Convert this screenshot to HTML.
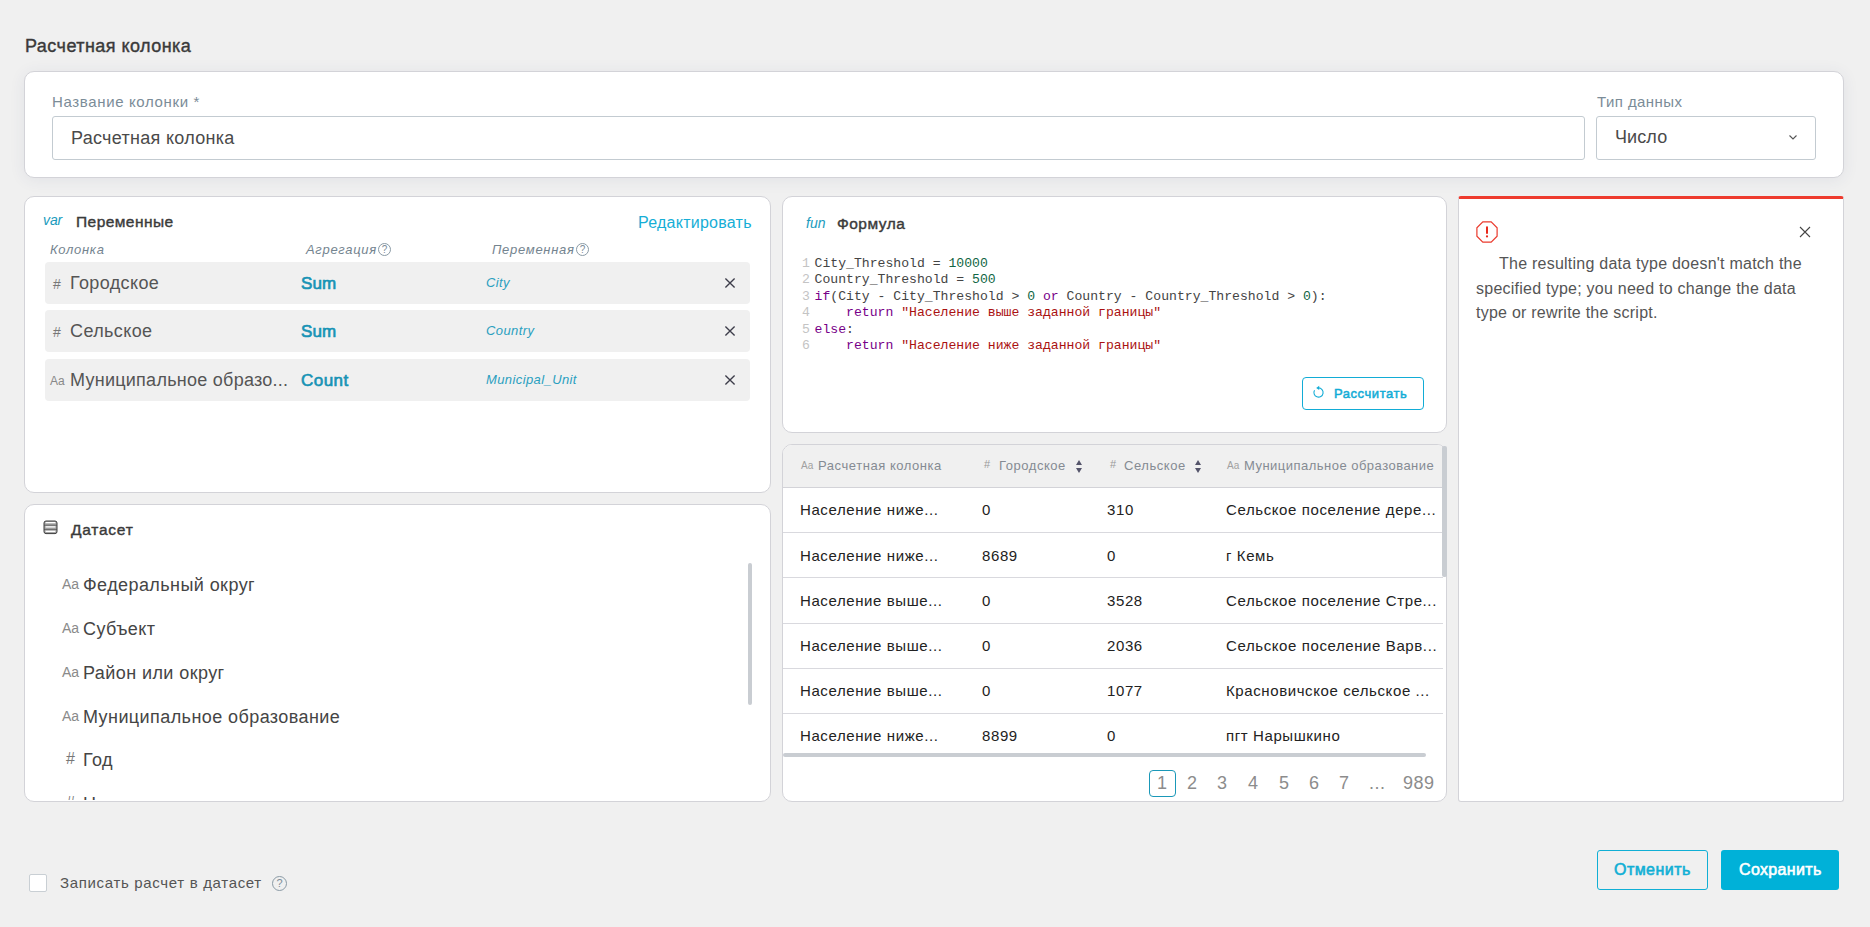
<!DOCTYPE html>
<html><head><meta charset="utf-8">
<style>
*{box-sizing:border-box;margin:0;padding:0}
html,body{width:1870px;height:927px;overflow:hidden;background:#f0f0f0;font-family:"Liberation Sans",sans-serif;color:#333}
.a{position:absolute}
.card{position:absolute;background:#fff;border:1px solid #d3d3d8;border-radius:10px}
.t{position:absolute;white-space:nowrap;line-height:1}
.sb{-webkit-text-stroke:.4px currentColor}
.row{position:absolute;left:45px;width:705px;height:42px;background:#f0f0f0;border-radius:4px}
.hdr{font-size:13px;font-style:italic;color:#74848f;letter-spacing:.7px}
.q{position:absolute;width:13px;height:13px;border:1px solid #8a9aa5;border-radius:50%;font-size:10px;line-height:11px;text-align:center;color:#7d8d99;font-style:normal;letter-spacing:0}
.code{position:absolute;left:802px;font-family:"Liberation Mono",monospace;font-size:13.13px;line-height:16.4px;white-space:pre;color:#444}
.ln{color:#c4c4c4;display:inline-block;width:12.5px}
.kw{color:#770088}.nu{color:#116644}.st{color:#aa1111}
.dl{position:absolute;left:62px;font-size:18px;color:#454545;letter-spacing:.42px;white-space:nowrap;line-height:1}
.aa{position:absolute;left:37px;font-size:14px;color:#8a8a8a;line-height:1;white-space:nowrap}
.hs{position:absolute;left:41px;margin-top:1px;font-size:16px;color:#777;line-height:1;white-space:nowrap}
.td{position:absolute;font-size:15px;color:#222;letter-spacing:.6px;white-space:nowrap;line-height:1}
.sep{position:absolute;left:783px;width:660px;height:1px;background:#d9d9de}
.pg{position:absolute;top:774px;font-size:18px;color:#8c8c8c;letter-spacing:.5px;line-height:1;white-space:nowrap}
</style></head><body>

<div class="t sb" style="left:25px;top:37px;font-size:18px;color:#3a3a3a;letter-spacing:.45px">Расчетная колонка</div>

<!-- top card -->
<div class="card" style="left:24px;top:71px;width:1820px;height:107px;box-shadow:0 2px 16px rgba(50,60,110,0.08)"></div>
<div class="t" style="left:52px;top:94px;font-size:15px;color:#7b8c98;letter-spacing:.64px">Название колонки *</div>
<div class="a" style="left:52px;top:116px;width:1533px;height:44px;border:1px solid #c3cbd1;border-radius:3px;background:#fff"></div>
<div class="t" style="left:71px;top:129px;font-size:18px;color:#4a4a4a;letter-spacing:.3px">Расчетная колонка</div>
<div class="t" style="left:1597px;top:94px;font-size:15px;color:#7b8c98;letter-spacing:.43px">Тип данных</div>
<div class="a" style="left:1596px;top:116px;width:220px;height:44px;border:1px solid #c3cbd1;border-radius:3px;background:#fff"></div>
<div class="t" style="left:1615px;top:128px;font-size:18px;color:#4a4a4a;letter-spacing:.1px">Число</div>
<svg class="a" style="left:1787px;top:133px" width="12" height="9" viewBox="0 0 12 9"><path d="M2.5 2.5 L6 6 L9.5 2.5" fill="none" stroke="#555" stroke-width="1.1"/></svg>

<!-- var card -->
<div class="card" style="left:24px;top:196px;width:747px;height:297px"></div>
<div class="t" style="left:43px;top:213px;font-size:14px;font-style:italic;color:#1a9bbd;letter-spacing:-.1px">var</div>
<div class="t sb" style="left:76px;top:214px;font-size:15.5px;color:#3a3a3a;letter-spacing:.44px">Переменные</div>
<div class="t" style="left:638px;top:215px;font-size:16px;color:#16aed6;letter-spacing:.25px">Редактировать</div>
<div class="t hdr" style="left:50px;top:243px">Колонка</div>
<div class="t hdr" style="left:306px;top:243px">Агрегация</div>
<div class="q" style="left:378px;top:243px">?</div>
<div class="t hdr" style="left:492px;top:243px">Переменная</div>
<div class="q" style="left:576px;top:243px">?</div>

<div class="row" style="top:262px"></div>
<div class="row" style="top:310px"></div>
<div class="row" style="top:359px"></div>
<div class="t" style="left:53px;top:277px;font-size:14px;color:#777">#</div>
<div class="t" style="left:70px;top:274px;font-size:18px;color:#555;letter-spacing:.38px">Городское</div>
<div class="t" style="left:301px;top:275px;font-size:17px;color:#1793b5;-webkit-text-stroke:.65px #1793b5;letter-spacing:.1px">Sum</div>
<div class="t" style="left:486px;top:276px;font-size:13px;font-style:italic;color:#2a9fbf;letter-spacing:.4px">City</div>
<div class="t" style="left:53px;top:325px;font-size:14px;color:#777">#</div>
<div class="t" style="left:70px;top:322px;font-size:18px;color:#555;letter-spacing:.38px">Сельское</div>
<div class="t" style="left:301px;top:323px;font-size:17px;color:#1793b5;-webkit-text-stroke:.65px #1793b5;letter-spacing:.1px">Sum</div>
<div class="t" style="left:486px;top:324px;font-size:13px;font-style:italic;color:#2a9fbf;letter-spacing:.4px">Country</div>
<div class="t" style="left:50px;top:375px;font-size:12px;color:#888">Aa</div>
<div class="t" style="left:70px;top:371px;font-size:18px;color:#555;letter-spacing:.26px">Муниципальное образо...</div>
<div class="t" style="left:301px;top:372px;font-size:17px;color:#1793b5;-webkit-text-stroke:.65px #1793b5;letter-spacing:.45px">Count</div>
<div class="t" style="left:486px;top:373px;font-size:13px;font-style:italic;color:#2a9fbf;letter-spacing:.4px">Municipal_Unit</div>
<svg class="a" style="left:724px;top:277px" width="12" height="12" viewBox="0 0 12 12"><path d="M1.4 1.4L10.6 10.6M10.6 1.4L1.4 10.6" stroke="#3d3d4a" stroke-width="1.35"/></svg>
<svg class="a" style="left:724px;top:325px" width="12" height="12" viewBox="0 0 12 12"><path d="M1.4 1.4L10.6 10.6M10.6 1.4L1.4 10.6" stroke="#3d3d4a" stroke-width="1.35"/></svg>
<svg class="a" style="left:724px;top:374px" width="12" height="12" viewBox="0 0 12 12"><path d="M1.4 1.4L10.6 10.6M10.6 1.4L1.4 10.6" stroke="#3d3d4a" stroke-width="1.35"/></svg>

<!-- dataset card -->
<div class="card" style="left:24px;top:504px;width:747px;height:298px;overflow:hidden">
</div>
<svg class="a" style="left:43px;top:520px" width="15" height="15" viewBox="0 0 15 15"><rect x="1" y="1" width="13" height="12.6" rx="2" fill="#a6a6a6" stroke="#3c3c3c" stroke-width="1"/><path d="M1 5.2H14M1 9.4H14" stroke="#3c3c3c" stroke-width=".6"/><path d="M2.6 2.6H12.4M2.6 6.9H12.4M2.6 11.3H12.4" stroke="#fff" stroke-width="1.3"/></svg>
<div class="t sb" style="left:71px;top:522px;font-size:15.5px;color:#3a3a3a;letter-spacing:.75px">Датасет</div>
<div class="a" style="left:25px;top:540px;width:740px;height:260px;overflow:hidden">
  <div class="dl" style="top:36px;left:58px">Федеральный округ</div><div class="aa" style="top:37px">Aa</div>
  <div class="dl" style="top:80px;left:58px">Субъект</div><div class="aa" style="top:81px">Aa</div>
  <div class="dl" style="top:124px;left:58px">Район или округ</div><div class="aa" style="top:125px">Aa</div>
  <div class="dl" style="top:168px;left:58px">Муниципальное образование</div><div class="aa" style="top:169px">Aa</div>
  <div class="dl" style="top:211px;left:58px">Год</div><div class="hs" style="top:210px">#</div>
  <div class="dl" style="top:255px;left:58px">Население</div><div class="hs" style="top:254px">#</div>
</div>
<div class="a" style="left:748px;top:563px;width:4px;height:142px;background:#c9cdd2;border-radius:2px"></div>

<!-- formula card -->
<div class="card" style="left:782px;top:196px;width:665px;height:237px"></div>
<div class="t" style="left:806px;top:216px;font-size:14px;font-style:italic;color:#1a9bbd">fun</div>
<div class="t sb" style="left:837px;top:216px;font-size:15.5px;color:#3a3a3a;letter-spacing:.48px">Формула</div>
<div class="code" style="top:256px"><span class="ln">1</span>City_Threshold = <span class="nu">10000</span>
<span class="ln">2</span>Country_Threshold = <span class="nu">500</span>
<span class="ln">3</span><span class="kw">if</span>(City - City_Threshold &gt; <span class="nu">0</span> <span class="kw">or</span> Country - Country_Threshold &gt; <span class="nu">0</span>):
<span class="ln">4</span>    <span class="kw">return</span> <span class="st">"Население выше заданной границы"</span>
<span class="ln">5</span><span class="kw">else</span>:
<span class="ln">6</span>    <span class="kw">return</span> <span class="st">"Население ниже заданной границы"</span></div>
<div class="a" style="left:1302px;top:377px;width:122px;height:33px;border:1px solid #12acd6;border-radius:4px"></div>
<svg class="a" style="left:1312px;top:385px" width="13" height="14" viewBox="0 0 13 14"><path d="M6.5 2.9 A4.6 4.6 0 1 1 2.52 5.2" fill="none" stroke="#12acd6" stroke-width="1.1"/><path d="M4.2 2.9 L7.2 0.8 L7.2 5 Z" fill="#12acd6"/></svg>
<div class="t sb" style="left:1334px;top:387px;font-size:13px;color:#12acd6;letter-spacing:.55px;-webkit-text-stroke:.5px #12acd6">Рассчитать</div>

<!-- table card -->
<div class="card" style="left:782px;top:444px;width:665px;height:358px;overflow:hidden">
  <div class="a" style="left:0;top:0;width:665px;height:43px;background:#f0f0f0;border-bottom:1px solid #d3d3d8"></div>
</div>
<div class="t" style="left:801px;top:461px;font-size:10px;color:#a0a0a0">Aa</div>
<div class="t" style="left:818px;top:459px;font-size:13px;color:#858b93;letter-spacing:.55px">Расчетная колонка</div>
<div class="t" style="left:984px;top:459px;font-size:11px;color:#9a9a9a">#</div>
<div class="t" style="left:999px;top:459px;font-size:13px;color:#858b93;letter-spacing:.55px">Городское</div>
<svg class="a" style="left:1075px;top:459px" width="8" height="15" viewBox="0 0 8 15"><path d="M4 1L7 6H1Z M4 14L7 9H1Z" fill="#55556b"/></svg>
<div class="t" style="left:1110px;top:459px;font-size:11px;color:#9a9a9a">#</div>
<div class="t" style="left:1124px;top:459px;font-size:13px;color:#858b93;letter-spacing:.55px">Сельское</div>
<svg class="a" style="left:1194px;top:459px" width="8" height="15" viewBox="0 0 8 15"><path d="M4 1L7 6H1Z M4 14L7 9H1Z" fill="#55556b"/></svg>
<div class="t" style="left:1227px;top:461px;font-size:10px;color:#a0a0a0">Aa</div>
<div class="t" style="left:1244px;top:459px;font-size:13px;color:#858b93;letter-spacing:.48px">Муниципальное образование</div>

<div class="td" style="left:800px;top:502px">Население ниже...</div>
<div class="td" style="left:982px;top:502px">0</div>
<div class="td" style="left:1107px;top:502px">310</div>
<div class="td" style="left:1226px;top:502px">Сельское поселение дере...</div>
<div class="sep" style="top:532px"></div>
<div class="td" style="left:800px;top:548px">Население ниже...</div>
<div class="td" style="left:982px;top:548px">8689</div>
<div class="td" style="left:1107px;top:548px">0</div>
<div class="td" style="left:1226px;top:548px">г Кемь</div>
<div class="sep" style="top:577px"></div>
<div class="td" style="left:800px;top:593px">Население выше...</div>
<div class="td" style="left:982px;top:593px">0</div>
<div class="td" style="left:1107px;top:593px">3528</div>
<div class="td" style="left:1226px;top:593px">Сельское поселение Стре...</div>
<div class="sep" style="top:623px"></div>
<div class="td" style="left:800px;top:638px">Население выше...</div>
<div class="td" style="left:982px;top:638px">0</div>
<div class="td" style="left:1107px;top:638px">2036</div>
<div class="td" style="left:1226px;top:638px">Сельское поселение Варв...</div>
<div class="sep" style="top:668px"></div>
<div class="td" style="left:800px;top:683px">Население выше...</div>
<div class="td" style="left:982px;top:683px">0</div>
<div class="td" style="left:1107px;top:683px">1077</div>
<div class="td" style="left:1226px;top:683px">Красновичское сельское ...</div>
<div class="sep" style="top:713px"></div>
<div class="td" style="left:800px;top:728px">Население ниже...</div>
<div class="td" style="left:982px;top:728px">8899</div>
<div class="td" style="left:1107px;top:728px">0</div>
<div class="td" style="left:1226px;top:728px">пгт Нарышкино</div>
<div class="a" style="left:783px;top:753px;width:643px;height:4px;background:#c9cdd2;border-radius:2px"></div>
<div class="a" style="left:1442px;top:446px;width:5px;height:131px;background:#c9cdd2;border-radius:2px"></div>

<div class="a" style="left:1149px;top:770px;width:27px;height:27px;border:1px solid #1a98b8;border-radius:4px"></div>
<div class="pg" style="left:1157px">1</div>
<div class="pg" style="left:1187px">2</div>
<div class="pg" style="left:1217px">3</div>
<div class="pg" style="left:1248px">4</div>
<div class="pg" style="left:1279px">5</div>
<div class="pg" style="left:1309px">6</div>
<div class="pg" style="left:1339px">7</div>
<div class="pg" style="left:1369px">...</div>
<div class="pg" style="left:1403px">989</div>

<!-- error card -->
<div class="card" style="left:1458px;top:196px;width:386px;height:606px;border-radius:3px;border-top:3px solid #ee3b2e"></div>
<svg class="a" style="left:1476px;top:221px" width="22" height="22" viewBox="0 0 22 22"><path d="M6.82 0.9H15.18L21.1 6.82V15.18L15.18 21.1H6.82L0.9 15.18V6.82Z" fill="none" stroke="#ea3a2d" stroke-width="1.2"/><path d="M11 6.2V11.9" stroke="#e8291c" stroke-width="2" stroke-linecap="round"/><circle cx="11" cy="15.4" r="1.1" fill="#e8291c"/></svg>
<svg class="a" style="left:1799px;top:226px" width="12" height="12" viewBox="0 0 12 12"><path d="M1 1L11 11M11 1L1 11" stroke="#444" stroke-width="1.1"/></svg>
<div class="a" style="left:1476px;top:252px;width:345px;font-size:16px;line-height:24.6px;color:#555;letter-spacing:.24px;text-indent:23px">The resulting data type doesn't match the specified type; you need to change the data type or rewrite the script.</div>

<!-- bottom -->
<div class="a" style="left:29px;top:874px;width:18px;height:18px;border:1px solid #c9cfd4;border-radius:2px;background:#fff"></div>
<div class="t" style="left:60px;top:875px;font-size:15px;color:#555;letter-spacing:.67px">Записать расчет в датасет</div>
<div class="q" style="left:272px;top:876px;width:15px;height:15px;line-height:13px;font-size:11px">?</div>
<div class="a" style="left:1597px;top:850px;width:111px;height:40px;border:1px solid #10afd5;border-radius:3px"></div>
<div class="t sb" style="left:1614px;top:862px;font-size:16px;color:#10afd5;letter-spacing:.45px;-webkit-text-stroke:.6px #10afd5">Отменить</div>
<div class="a" style="left:1721px;top:850px;width:118px;height:40px;border-radius:3px;background:#00b1d8"></div>
<div class="t sb" style="left:1739px;top:862px;font-size:16px;color:#fff;letter-spacing:.36px;-webkit-text-stroke:.6px #fff">Сохранить</div>

</body></html>
